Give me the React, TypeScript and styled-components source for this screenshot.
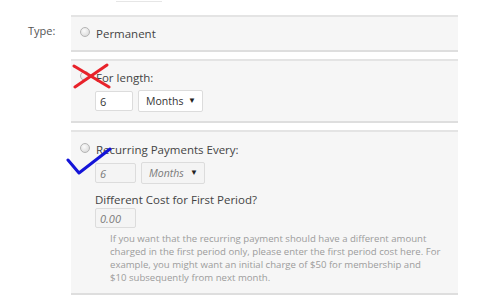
import styled, { createGlobalStyle, css } from "styled-components";

const GlobalStyle = createGlobalStyle`
  html, body {
    margin: 0;
    padding: 0;
    background: #fff;
  }
  body {
    font-family: "Open Sans", "Liberation Sans", sans-serif;
    color: #444;
  }
`;

/*
 * App is the "Type" field of a subscription form with its three options
*/
const App = (): JSX.Element => {
  return (
    <>
      <GlobalStyle />
      <Page>
        <PrevFieldEdge />
        <FieldRow>
          <FieldLabel>Type:</FieldLabel>
          <Options>
            <Panel>
              <RadioRow>
                <Radio />
                <span>Permanent</span>
              </RadioRow>
            </Panel>

            <Panel>
              <RadioRow>
                <Radio />
                <span>For length:</span>
                <CrossMark viewBox="0 0 40 26">
                  <line x1="2" y1="3" x2="37" y2="24" />
                  <line x1="3" y1="24" x2="35" y2="2" />
                </CrossMark>
              </RadioRow>
              <Controls>
                <TextBox value="6" readOnly $w={38} />
                <Select $w={65}>
                  <span>Months</span>
                  <Arrow>▼</Arrow>
                </Select>
              </Controls>
            </Panel>

            <Panel $tall>
              <RadioRow>
                <Radio />
                <span>Recurring Payments Every:</span>
                <CheckMark viewBox="0 0 46 30">
                  <polyline points="2,14 13,27 44,3" />
                </CheckMark>
              </RadioRow>
              <Controls>
                <TextBox value="6" readOnly $w={41} $dim />
                <Select $w={64} $dim>
                  <span>Months</span>
                  <Arrow>▼</Arrow>
                </Select>
              </Controls>
              <SubLabel>Different Cost for First Period?</SubLabel>
              <Controls $tight>
                <TextBox value="0.00" readOnly $w={41} $dim />
              </Controls>
              <HelpNote>
                If you want that the recurring payment should have a different amount charged in
                the first period only, please enter the first period cost here. For example, you
                might want an initial charge of $50 for membership and{" "}
                <NoWrap>$10 subsequently</NoWrap> from next month.
              </HelpNote>
            </Panel>
          </Options>
        </FieldRow>
      </Page>
    </>
  );
};

export default App;

//lines below this point are styled-components logic

const Page = styled.div`
  width: 487px;
  height: 300px;
  overflow: hidden;
`;

/*
 * PrevFieldEdge is the bottom edge of the field above, cut by the frame
*/
const PrevFieldEdge = styled.div`
  width: 46px;
  height: 1px;
  margin-left: 116px;
  border-bottom: 1px solid #e6e6e6;
`;

const FieldRow = styled.div`
  display: flex;
  margin-top: 13px;
`;

const FieldLabel = styled.div`
  width: 71px;
  box-sizing: border-box;
  padding: 9px 0 0 28px;
  font-size: 11px;
  line-height: 14px;
  color: #555;
`;

const Options = styled.div`
  width: 387px;
  display: flex;
  flex-direction: column;
  gap: 7px;
`;

/*
 * Panel is one option box, grey with a rule above and below
*/
const Panel = styled.div<{ $tall?: boolean }>`
  background: #f6f6f6;
  border-top: 2px solid #e4e4e4;
  border-bottom: 2px solid #dedede;
  padding: ${(p) => (p.$tall ? "10px 9px 9px" : "9px")};
`;

const RadioRow = styled.div`
  position: relative;
  display: flex;
  align-items: center;
  gap: 6px;
  font-size: 11.5px;
  line-height: 15px;
  color: #444;
`;

const Radio = styled.span`
  width: 10px;
  height: 10px;
  margin-top: -3px;
  box-sizing: border-box;
  border-radius: 50%;
  border: 1px solid #b4b4b4;
  background: radial-gradient(circle at 40% 35%, #fbfbfb 0%, #e4e4e4 60%, #cfcfcf 100%);
  flex: none;
`;

/*
 * CrossMark is the red X scribbled over the "For length" radio
*/
const CrossMark = styled.svg`
  position: absolute;
  left: -8px;
  top: -7px;
  width: 40px;
  height: 26px;
  stroke: #e8222a;
  stroke-width: 3;
  stroke-linecap: round;
  fill: none;
`;

/*
 * CheckMark is the blue tick drawn next to "Recurring Payments"
*/
const CheckMark = styled.svg`
  position: absolute;
  left: -14px;
  top: 4px;
  width: 46px;
  height: 30px;
  stroke: #1414d8;
  stroke-width: 3;
  stroke-linejoin: round;
  stroke-linecap: round;
  fill: none;
`;

const Controls = styled.div<{ $tight?: boolean }>`
  display: flex;
  align-items: center;
  gap: 5px;
  margin: ${(p) => (p.$tight ? "1px" : "5px")} 0 0 15px;
`;

const fieldLook = css<{ $dim?: boolean; $w: number }>`
  box-sizing: border-box;
  width: ${(p) => p.$w}px;
  border: 1px solid #dcdcdc;
  border-radius: 2px;
  font-family: "Open Sans", "Liberation Sans", sans-serif;
  font-size: 11px;
  color: ${(p) => (p.$dim ? "#7a7a7a" : "#333")};
  font-style: ${(p) => (p.$dim ? "italic" : "normal")};
  background: ${(p) => (p.$dim ? "#f4f4f4" : "#fff")};
`;

const TextBox = styled.input<{ $dim?: boolean; $w: number }>`
  ${fieldLook};
  height: 20px;
  padding: 0 4px;
  outline: none;
`;

const Select = styled.div<{ $dim?: boolean; $w: number }>`
  ${fieldLook};
  height: 22px;
  display: flex;
  align-items: center;
  justify-content: space-between;
  padding: 0 6px 0 7px;
  font-size: 10.5px;
`;

const Arrow = styled.span`
  font-size: 8px;
  font-style: normal;
  color: #222;
  margin-top: -3px;
`;

const SubLabel = styled.div`
  margin: 8px 0 0 15px;
  font-size: 11.5px;
  line-height: 15px;
  color: #444;
`;

const HelpNote = styled.p`
  margin: 4px 0 0 30px;
  width: 334px;
  font-size: 9.6px;
  line-height: 13px;
  color: #9c9c9c;
`;

/*
 * NoWrap keeps a pair of words together on one line
*/
const NoWrap = styled.span`
  white-space: nowrap;
`;
